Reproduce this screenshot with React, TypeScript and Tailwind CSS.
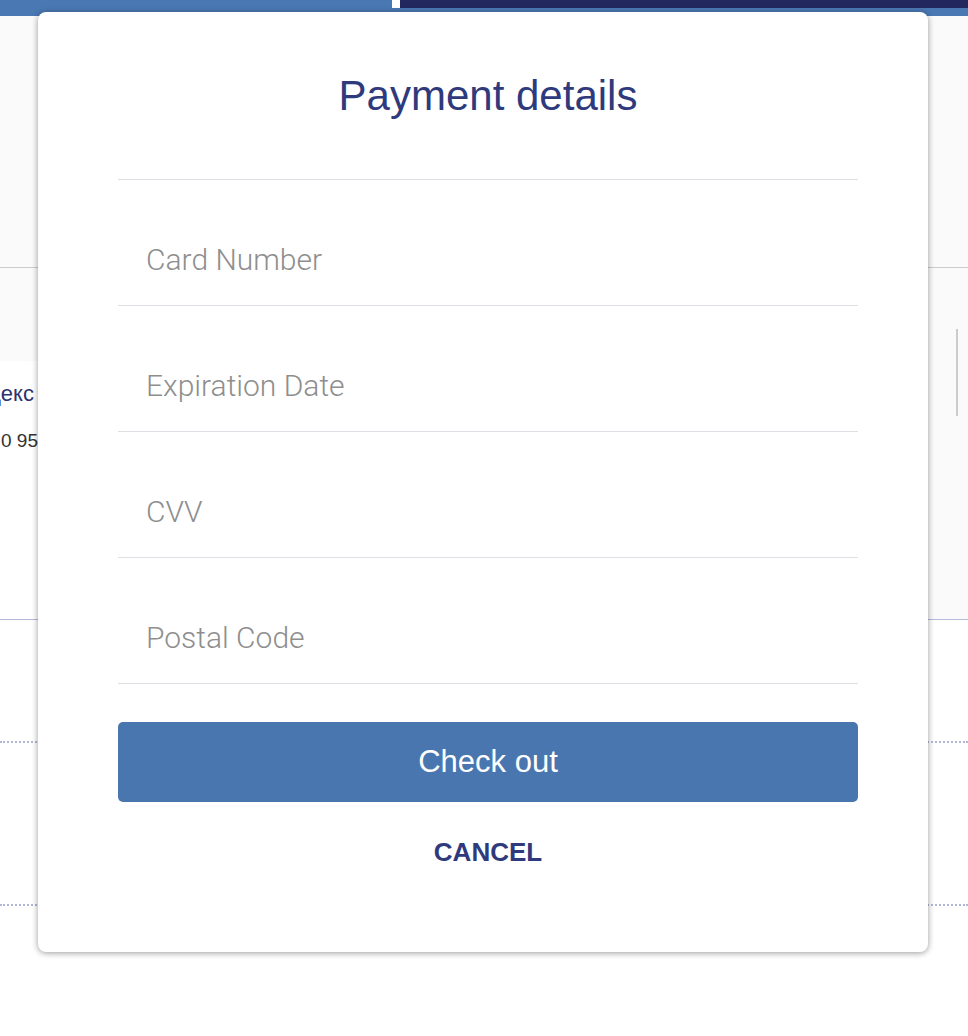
import React from "react";

const fields = ["Card Number", "Expiration Date", "CVV", "Postal Code"];

export default function App() {
  return (
    <div
      className="relative w-[968px] h-[1036px] overflow-hidden bg-white"
      style={{ fontFamily: '"Liberation Sans", Arial, sans-serif' }}
    >
      {/* background page */}
      <div className="flex flex-col">
        <div className="relative h-[16px] bg-[#4a78b3]">
          <div className="absolute right-0 top-0 h-[8px] w-[568px] bg-[#22275e]" />
          <div className="absolute left-[392px] top-0 h-[8px] w-[8px] bg-white" />
        </div>
        <div className="h-[252px] bg-[#fafafa] border-b border-[#cccccc]" />
        <div className="relative h-[352px] bg-[#fafafa] border-b border-[#b4bcdc] flex">
          <div className="mt-[93px] w-[40px] bg-white flex flex-col overflow-hidden">
            <div className="ml-[-40px] pt-[20px] text-[22px] leading-[26px] text-[#2b3270] whitespace-nowrap">
              Яндекс
            </div>
            <div className="ml-[1px] mt-[22px] text-[19px] leading-[24px] text-[#333] whitespace-nowrap">
              0 95 00
            </div>
          </div>
          <div className="ml-auto mt-[61px] mr-[10px] w-[2px] h-[87px] bg-[#cccccc]" />
        </div>
        <div className="h-[121px]" />
        <div className="border-t-2 border-dotted border-[#b0b6d6]" />
        <div className="h-[161px]" />
        <div className="border-t-2 border-dotted border-[#b0b6d6]" />
      </div>

      {/* modal */}
      <div className="absolute left-[38px] top-[12px] w-[890px] rounded-[8px] bg-white shadow-[0_1px_6px_rgba(0,0,0,0.4)] pl-[80px] pr-[70px] pb-[85px] flex flex-col">
        <div className="pt-[59px] pb-[58px] border-b border-[#dde1e6] text-center text-[42px] leading-[50px] text-[#2f3a7d]">
          Payment details
        </div>
        {fields.map((f) => (
          <div
            key={f}
            className="h-[126px] border-b border-[#dde1e6] flex items-end pl-[28px] pb-[27px]"
          >
            <input
              placeholder={f}
              className="w-full bg-transparent outline-none text-[30px] leading-[36px] h-[36px] font-light text-[#555] placeholder:text-[#8e8e8e]"
              style={{ fontFamily: 'Roboto, "Liberation Sans", sans-serif' }}
            />
          </div>
        ))}
        <button className="mt-[38px] h-[80px] w-full rounded-[5px] bg-[#4a76b0] text-white text-[31px] leading-[36px]">
          Check out
        </button>
        <div className="mt-[35px] text-center text-[26px] leading-[30px] font-bold text-[#2f3a7d]">
          CANCEL
        </div>
      </div>
    </div>
  );
}
